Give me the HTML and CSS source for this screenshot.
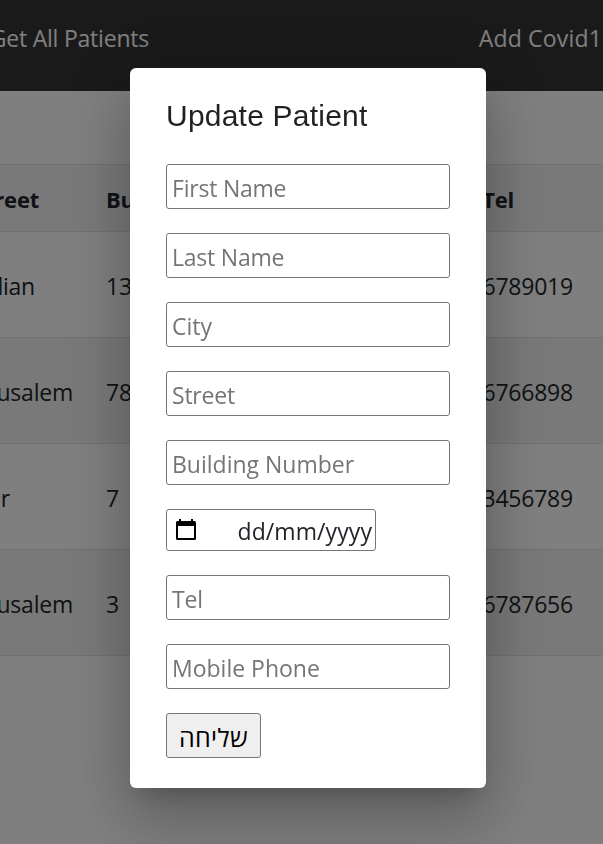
FILE: index.html
```
<!DOCTYPE html>
<html lang="en">
<head>
<meta charset="utf-8">
<title>Update Patient</title>
<link rel="stylesheet" href="styles.css">
</head>
<body>
<div class="page">
  <nav class="navbar"><span class="nav-left">Get All Patients</span><span class="nav-right">Add Covid1</span></nav>
  <div class="table">
    <div class="row head"><span class="street w-street">Street</span><span class="building">Bu</span><span class="tel w-tel">Tel</span></div>
    <div class="row"><span class="street w-lian">lian</span><span class="building">13</span><span class="tel">6789019</span></div>
    <div class="row striped"><span class="street w-city">Jerusalem</span><span class="building">78</span><span class="tel">6766898</span></div>
    <div class="row"><span class="street w-r">r</span><span class="building">7</span><span class="tel">3456789</span></div>
    <div class="row striped"><span class="street w-city">Jerusalem</span><span class="building">3</span><span class="tel">6787656</span></div>
  </div>
</div>
<div class="backdrop">
  <form class="dialog">
    <h2>Update Patient</h2>
    <input type="text" placeholder="First Name">
    <input type="text" placeholder="Last Name">
    <input class="loose" type="text" placeholder="City">
    <input type="text" placeholder="Street">
    <input class="loose" type="text" placeholder="Building Number">
    <div class="date">
      <svg width="20" height="22" viewBox="0 0 20 22"><path fill-rule="evenodd" d="M3 0h2v2h10V0h2v2h1.500a1.500 1.500 0 0 1 1.500 1.500v16a1.500 1.500 0 0 1-1.500 1.500h-17A1.500 1.500 0 0 1 0 19.500v-16A1.500 1.500 0 0 1 1.500 2H3zM2 7v12h16V7z"/></svg>
      <span>dd/mm/yyyy</span>
    </div>
    <input type="text" placeholder="Tel">
    <input class="loose" type="text" placeholder="Mobile Phone">
    <button type="button">שליחה</button>
  </form>
</div>
</body>
</html>
```
FILE: styles.css
```
* { box-sizing: border-box; }
body {
  margin: 0;
  height: 844px;
  overflow: hidden;
  background: #fff;
  color: #212529;
  font: 23px/36px "Open Sans", "Noto Sans", sans-serif;
  letter-spacing: -0.22px;
}
.page { width: 603px; height: 844px; overflow: hidden; }
.navbar {
  display: flex;
  justify-content: space-between;
  height: 91px;
  padding-top: 20px;
  background: #343434;
  color: #fff;
  white-space: nowrap;
}
.nav-left { display: flex; justify-content: flex-end; width: 149px; }
.nav-right { display: flex; justify-content: flex-end; width: 125px; padding-right: 1px; letter-spacing: 0.18px; }
.table { margin-top: 73px; border-top: 1px solid #dee2e6; }
.row {
  display: grid;
  grid-template-columns: 106px 300px 167px;
  height: 106px;
  padding-top: 36px;
  border-bottom: 1px solid #dee2e6;
}
.row.head { height: 67px; padding-top: 16px; background: #f2f2f2; font-weight: 700; font-size: 22px; }
.striped { background: #f2f2f2; }
.street { display: flex; justify-content: flex-end; }
.w-street { width: 39px; }
.w-lian { width: 35px; }
.w-city { width: 73px; }
.w-r { width: 10px; }
.tel { text-align: right; }
.w-tel { width: 108px; }
.backdrop {
  position: fixed;
  inset: 0;
  padding: 68px 0 0 130px;
  background: rgba(0, 0, 0, 0.5);
}
.dialog {
  display: flex;
  flex-direction: column;
  align-items: flex-start;
  gap: 24px;
  width: 356px;
  height: 720px;
  padding: 24px 36px;
  border-radius: 6px;
  background: #fff;
  box-shadow: 0 16.5px 22.5px -10.5px rgba(0, 0, 0, 0.2),
    0 36px 57px 4.5px rgba(0, 0, 0, 0.14),
    0 13.5px 69px 12px rgba(0, 0, 0, 0.12);
}
h2 {
  height: 48px;
  margin: 0;
  font: 400 30px/48px "Liberation Sans", sans-serif;
  letter-spacing: 0.22px;
  color: rgba(0, 0, 0, 0.87);
}
input {
  width: 284px;
  height: 45px;
  flex: none;
  padding: 3px 5px 0;
  border: 1px solid #767676;
  border-radius: 3px;
  background: #fff;
  font: inherit;
  letter-spacing: inherit;
}
input::placeholder { color: #757575; opacity: 1; }
.loose { letter-spacing: 0; }
.date {
  display: flex;
  justify-content: space-between;
  width: 210px;
  height: 42px;
  flex: none;
  padding: 3px 3px 0 9px;
  border: 1px solid #767676;
  border-radius: 3px;
  letter-spacing: 0.08px;
}
.date svg { margin-top: 6px; }
button {
  width: 95px;
  height: 45px;
  flex: none;
  padding: 3px 0 0;
  border: 1px solid #767676;
  border-radius: 3px;
  background: #efefef;
  color: #000;
  font: 25px/36px "Open Sans", "DejaVu Sans", sans-serif;
  letter-spacing: 0.4px;
}
```
